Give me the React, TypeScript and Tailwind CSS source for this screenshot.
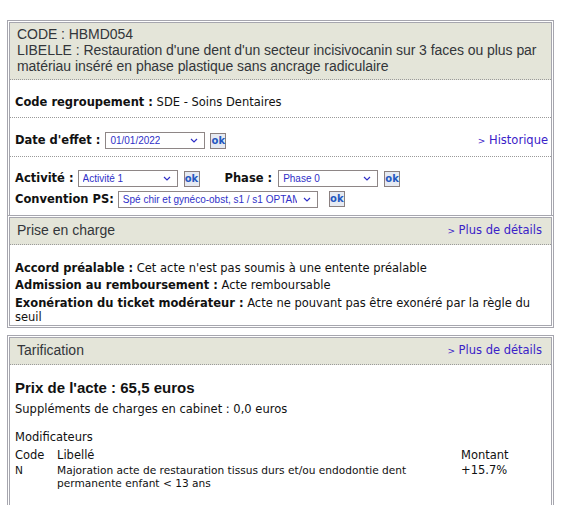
import { ReactNode } from 'react';

const titleFont = { fontFamily: '"Liberation Sans", Arial, sans-serif' };
const bodyFont = { fontFamily: '"DejaVu Sans", Verdana, sans-serif' };

function FakeSelect({ value, width }: { value: string; width: string }) {
  return (
    <div
      className={`flex h-[17px] items-center justify-between border border-[#8e8686] bg-white pl-[4px] pr-[6px] ${width}`}
    >
      <span
        className="overflow-hidden whitespace-nowrap text-[10px] text-[#3030c8]"
        style={titleFont}
      >
        {value}
      </span>
      <svg width="8" height="5" viewBox="0 0 8 5" className="ml-[6px] shrink-0">
        <path d="M1 1 L4 4 L7 1" fill="none" stroke="#3030c8" strokeWidth="1.2" />
      </svg>
    </div>
  );
}

function OkButton() {
  return (
    <span className="flex h-[16px] w-[16px] items-center justify-center border border-[#8a8080] bg-[#e6eaf2] text-[10px] font-bold leading-none text-[#2458c0]">
      ok
    </span>
  );
}

function LinkText({ text }: { text: string }) {
  return (
    <span className="text-[11.5px] text-[#3a22c8]" style={bodyFont}>
      <span className="text-[9px]">&gt;</span> {text}
    </span>
  );
}

function SectionHeader({ title, link }: { title: string; link?: string }) {
  return (
    <div className="flex h-[27px] items-center justify-between border-b border-dotted border-[#9a9a9a] bg-[#e4e5d9] pl-[7px] pr-[9px]">
      <span className="text-[14px] text-[#33363a]" style={titleFont}>
        {title}
      </span>
      {link && <LinkText text={link} />}
    </div>
  );
}

function Section({ children, className = '' }: { children: ReactNode; className?: string }) {
  return (
    <div className={`border-[3px] border-double border-[#a6a6ae] bg-white ${className}`}>
      {children}
    </div>
  );
}

export default function App() {
  return (
    <div className="min-h-[505px] bg-white pl-[7px] pt-[20px] text-[#111]" style={bodyFont}>
      <div className="w-[547px]">
        <Section className="border-b-0">
          <div
            className="border-b border-dotted border-[#9a9a9a] bg-[#e4e5d9] px-[7px] pb-[5px] pt-[3px] text-[14px] leading-[16px] tracking-[-0.05px] text-[#33363a]"
            style={titleFont}
          >
            <div>CODE : HBMD054</div>
            <div>
              LIBELLE : Restauration d'une dent d'un secteur incisivocanin sur 3 faces ou plus par
              matériau inséré en phase plastique sans ancrage radiculaire
            </div>
          </div>

          <div className="border-b border-dotted border-[#9a9a9a] pb-[7px] pl-[5px] pt-[15px] text-[11.5px] leading-[15px]">
            <b>Code regroupement :</b> SDE - Soins Dentaires
          </div>

          <div className="flex items-center justify-between border-b border-dotted border-[#9a9a9a] pb-[7px] pl-[5px] pr-[3px] pt-[14px] text-[11.5px]">
            <div className="flex items-center">
              <b className="mr-[5px]">Date d'effet :</b>
              <FakeSelect value="01/01/2022" width="w-[100px]" />
              <span className="ml-[5px]">
                <OkButton />
              </span>
            </div>
            <LinkText text="Historique" />
          </div>

          <div className="pb-[7px] pl-[5px] pt-[13px] text-[11.5px]">
            <div className="flex items-center">
              <b className="mr-[4px]">Activité :</b>
              <FakeSelect value="Activité 1" width="w-[100px]" />
              <span className="ml-[6px]">
                <OkButton />
              </span>
              <b className="ml-[25px] mr-[6px]">Phase :</b>
              <FakeSelect value="Phase 0" width="w-[100px]" />
              <span className="ml-[6px]">
                <OkButton />
              </span>
            </div>
            <div className="mt-[3px] flex items-center">
              <b className="mr-[4px]">Convention PS:</b>
              <FakeSelect value="Spé chir et gynéco-obst, s1 / s1 OPTAM" width="w-[200px]" />
              <span className="ml-[11px]">
                <OkButton />
              </span>
            </div>
          </div>
        </Section>

        <Section>
          <SectionHeader title="Prise en charge" link="Plus de détails" />
          <div className="pb-[1px] pl-[5px] pr-[10px] pt-[16px] text-[11.5px] leading-[14px]">
            <div>
              <b>Accord préalable :</b> Cet acte n'est pas soumis à une entente préalable
            </div>
            <div className="mt-[3px]">
              <b>Admission au remboursement :</b> Acte remboursable
            </div>
            <div className="mt-[4px]">
              <b>Exonération du ticket modérateur :</b> Acte ne pouvant pas être exonéré par la
              règle du seuil
            </div>
          </div>
        </Section>

        <Section className="mt-[7px]">
          <SectionHeader title="Tarification" link="Plus de détails" />
          <div className="pl-[5px] pr-[10px] pt-[14px] text-[11.5px]">
            <div className="text-[15px] font-bold leading-[18px]" style={titleFont}>
              Prix de l'acte : 65,5 euros
            </div>
            <div className="mt-[5px] leading-[14px]">Suppléments de charges en cabinet : 0,0 euros</div>
            <div className="mt-[14px] leading-[14px]">Modificateurs</div>
            <div className="mt-[4px] grid grid-cols-[42px_404px_1fr] leading-[14px]">
              <span>Code</span>
              <span>Libellé</span>
              <span>Montant</span>
            </div>
            <div className="mt-[2px] grid grid-cols-[42px_404px_1fr] text-[10.6px] leading-[13px]">
              <span>N</span>
              <span>
                Majoration acte de restauration tissus durs et/ou endodontie dent permanente enfant
                &lt; 13 ans
              </span>
              <span className="text-[11.5px]">+15.7%</span>
            </div>
            <div className="h-[30px]" />
          </div>
        </Section>
      </div>
    </div>
  );
}
